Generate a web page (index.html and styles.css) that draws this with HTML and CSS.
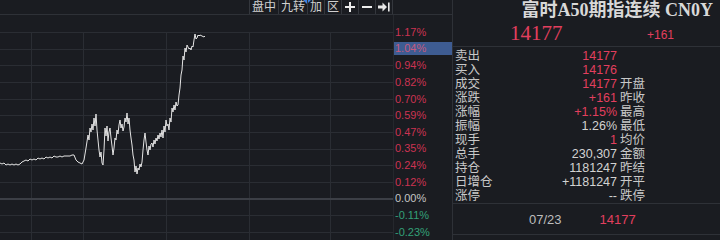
FILE: index.html
```html
<!DOCTYPE html>
<html lang="zh-CN">
<head>
  <meta charset="UTF-8" />
  <title>富时A50期指连续</title>
  <link rel="stylesheet" href="styles.css">
</head>
<body>
  <div class="screen">
    <div class="chart-side">
      <div class="toolbar">
        <span class="tool">盘中</span>
        <span class="tool flag">九转</span>
        <span class="tool">加</span>
        <span class="tool">区</span>
        <span class="tool sign" title="放大">
          <svg width="10" height="10" viewBox="0 0 10 10"><path d="M4 0h2v4h4v2H6v4H4V6H0V4h4z" fill="#ececec"/></svg>
        </span>
        <span class="tool sign" title="缩小">
          <svg width="10" height="10" viewBox="0 0 10 10"><rect x="0" y="4" width="10" height="2" fill="#ececec"/></svg>
        </span>
        <span class="tool">
          <svg width="12" height="10" viewBox="0 0 12 10">
            <path d="M0 3.5h4.5V0.5L9 5l-4.5 4.5V6.5H0z" fill="#e8e8e8"/>
            <rect x="10" y="0.5" width="1.6" height="9" fill="#e8e8e8"/>
          </svg>
        </span>
      </div>
      <div class="chart-body">
        <svg class="plot" width="393" height="225" viewBox="0 15 393 225">
          <g stroke="#2a2d33" stroke-width="1">
            <line x1="0" y1="32.5" x2="393" y2="32.5"/>
            <line x1="0" y1="49.5" x2="393" y2="49.5"/>
            <line x1="0" y1="65.5" x2="393" y2="65.5"/>
            <line x1="0" y1="82.5" x2="393" y2="82.5"/>
            <line x1="0" y1="99.5" x2="393" y2="99.5"/>
            <line x1="0" y1="115.5" x2="393" y2="115.5"/>
            <line x1="0" y1="132.5" x2="393" y2="132.5"/>
            <line x1="0" y1="149.5" x2="393" y2="149.5"/>
            <line x1="0" y1="165.5" x2="393" y2="165.5"/>
            <line x1="0" y1="182.5" x2="393" y2="182.5"/>
            <line x1="0" y1="215.5" x2="393" y2="215.5"/>
            <line x1="0" y1="232.5" x2="393" y2="232.5"/>
            <line x1="31.5" y1="32" x2="31.5" y2="240"/>
            <line x1="83.5" y1="32" x2="83.5" y2="240"/>
            <line x1="166.5" y1="32" x2="166.5" y2="240"/>
            <line x1="249.5" y1="32" x2="249.5" y2="240"/>
            <line x1="330.5" y1="32" x2="330.5" y2="240"/>
          </g>
          <line x1="0" y1="199" x2="393" y2="199" stroke="#3c3f46" stroke-width="2"/>
          <polyline fill="none" stroke="#e4e4e4" stroke-width="1" stroke-linejoin="round"
            points="0,163 2,164 4,163 6,165 8,164 10,165 12,164 14,165 16,164 18,165 20,164 22,162 24,161 26,160 28,161 30,159 32,160 34,159 36,160 38,158 40,159 42,158 44,159 46,157 48,158 50,157 52,158 54,156 56,157 58,157 60,156 62,157 64,156 66,156 68,156 70,156 72,155 74,155 76,160 78,162 80,163 82,164 84,160
            86,148 88,135 89,140 90,128 91,132 92,124 93,130 94,118 95,126 96,114 97,130 98,140 99,150 100,157 101,152 102,163 103,165 104,150 105,128 106,136 107,126 108,141 109,132 110,128 111,138 112,146 113,155 114,148 115,138 116,140 117,130 118,134 119,125 120,120 121,128 122,124 123,131 124,127 125,118 126,122 127,113 128,124 129,118 130,130 131,138 132,145 133,155 134,160 135,172 136,166 137,174 138,168 139,170 140,164 141,167 142,162 143,150 144,140 145,133 146,142 147,150 148,155 149,146 150,150 151,144 152,143 153,147 154,140 155,144 156,138 157,141 158,135 159,139 160,133 161,137 162,130 163,138 164,126 165,132 166,120 167,126 168,124 169,130 170,118 171,122 172,108 173,112 174,105 175,110 176,102 177,106 178,105 179,95 180,88 181,75 182,70 183,56 184,60 185,48 186,52 187,45 188,47 189,49 190,48 191,50 192,46 193,47 194,40 195,34 196,39 197,38 198,35 199,36 200,35 202,36 204,37 205,36"/>
        </svg>
        <div class="axis">
          <span class="up">1.17%</span>
          <span class="up on"><i>1.04%</i></span>
          <span class="up">0.94%</span>
          <span class="up">0.82%</span>
          <span class="up">0.70%</span>
          <span class="up">0.59%</span>
          <span class="up">0.47%</span>
          <span class="up">0.35%</span>
          <span class="up">0.24%</span>
          <span class="up">0.12%</span>
          <span>0.00%</span>
          <span class="down">-0.11%</span>
          <span class="down">-0.23%</span>
        </div>
      </div>
    </div>

    <div class="quote">
      <div class="title">富时A50期指连续 CN0Y</div>
      <div class="price-row">
        <span class="price">14177</span>
        <span class="chg">+161</span>
      </div>
      <div class="table">
        <div class="row"><span>卖出</span><b class="red">14177</b><span></span></div>
        <div class="row"><span>买入</span><b class="red">14176</b><span></span></div>
        <div class="row"><span>成交</span><b class="red">14177</b><span>开盘</span></div>
        <div class="row"><span>涨跌</span><b class="red">+161</b><span>昨收</span></div>
        <div class="row"><span>涨幅</span><b class="red">+1.15%</b><span>最高</span></div>
        <div class="row"><span>振幅</span><b>1.26%</b><span>最低</span></div>
        <div class="row"><span>现手</span><b class="red">1</b><span>均价</span></div>
        <div class="row"><span>总手</span><b>230,307</b><span>金额</span></div>
        <div class="row"><span>持仓</span><b>1181247</b><span>昨结</span></div>
        <div class="row"><span>日增仓</span><b>+1181247</b><span>开平</span></div>
        <div class="row"><span>涨停</span><b>--</b><span>跌停</span></div>
      </div>
      <div class="foot">
        <span class="date">07/23</span>
        <span class="red">14177</span>
      </div>
    </div>
  </div>
</body>
</html>
```

FILE: styles.css
```css
:root {
  --background: #1a1c21;
  --grid: #2a2d33;
  --line: #2e3137;
  --text: #c8c8c8;
  --value: #d2d2d2;
  --red: #e23f5e;
  --axis-red: #cc3352;
  --axis-green: #33a078;
  --mark: #3e5c92;
}

html,
body {
  margin: 0;
  padding: 0;
  background-color: var(--background);
}

body {
  font-family: "Liberation Sans", "Noto Sans CJK SC", sans-serif;
  color: var(--text);
  width: 720px;
  height: 240px;
  overflow: hidden;
}

.screen {
  display: flex;
  height: 240px;
}

/* left: intraday chart */
.chart-side {
  width: 452px;
  display: flex;
  flex-direction: column;
}

.toolbar {
  height: 14px;
  display: flex;
  justify-content: flex-end;
  padding-right: 59px;
  border-bottom: 1px solid var(--line);
}

.tool {
  position: relative;
  display: flex;
  align-items: center;
  justify-content: center;
  height: 14px;
  padding: 0 2px;
  border-left: 1px solid #34373d;
  font-family: "Liberation Sans", "Noto Sans CJK SC", sans-serif;
  font-size: 12px;
  line-height: 14px;
  color: #d0d0d0;
}

.tool:last-child {
  border-right: 1px solid #34373d;
}

.tool.sign {
  width: 12px;
}

.flag::after {
  content: "";
  position: absolute;
  top: 0;
  right: -4px;
  border-left: 4px solid transparent;
  border-right: 4px solid transparent;
  border-top: 4px solid #3b7fe0;
}

.chart-body {
  display: flex;
  flex: 1;
}

.plot {
  display: block;
  border-right: 1px solid #25282d;
}

.axis {
  width: 58px;
  display: flex;
  flex-direction: column;
  padding-top: 9px;
  font-size: 11px;
  color: #c4c4c4;
}

.axis span {
  height: 16.65px;
  line-height: 16.65px;
  padding-left: 1px;
  white-space: nowrap;
}

.axis .up {
  color: var(--axis-red);
}

.axis .down {
  color: var(--axis-green);
}

.axis .on {
  display: flex;
  align-items: center;
  padding-left: 0;
}

.axis .on i {
  display: block;
  width: 100%;
  height: 13px;
  line-height: 13px;
  padding-left: 1px;
  font-style: normal;
  color: #c65a7e;
  background-color: var(--mark);
}

/* right: quote panel */
.quote {
  width: 267px;
  border-left: 1px solid var(--line);
  display: flex;
  flex-direction: column;
}

.title {
  height: 21px;
  line-height: 21px;
  text-align: right;
  padding-right: 7px;
  font-family: "Liberation Serif", "Noto Sans CJK SC", serif;
  font-weight: 700;
  font-size: 18px;
  color: #d8d8d8;
  white-space: nowrap;
}

.price-row {
  height: 25px;
  display: flex;
  align-items: center;
  justify-content: space-between;
  padding: 0 46px 0 57px;
  border-bottom: 1px solid var(--line);
}

.price {
  font-family: "Liberation Serif", serif;
  font-size: 21px;
  color: var(--red);
}

.chg {
  font-size: 12px;
  color: var(--red);
  padding-top: 2px;
}

.table {
  padding: 2px 0 0 2px;
  border-bottom: 1px solid var(--line);
}

.row {
  display: grid;
  grid-template-columns: 40px 122px auto;
  height: 14px;
  line-height: 14px;
  font-size: 12.5px;
  white-space: nowrap;
}

.row b {
  font-weight: 400;
  text-align: right;
  color: var(--value);
}

.row span:last-child {
  padding-left: 3px;
}

.red,
.row b.red {
  color: var(--red);
}

.foot {
  height: 30px;
  display: flex;
  align-items: center;
  padding-left: 76px;
  font-size: 13px;
  border-bottom: 1px solid var(--line);
}

.foot .date {
  color: #bdbdbd;
  margin-right: 38px;
}
```
